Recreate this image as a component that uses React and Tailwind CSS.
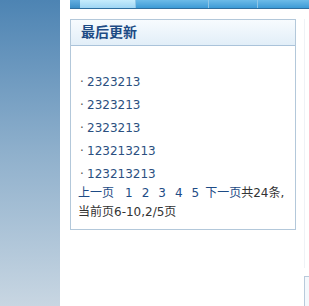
const items = ["2323213", "2323213", "2323213", "123213213", "123213213"];
const pages = ["1", "2", "3", "4", "5"];

const App = () => {
  return (
    <div className="flex h-[306px] w-[309px] overflow-hidden bg-white font-['DejaVu_Sans','Noto_Sans_CJK_SC',sans-serif]">
      <div className="h-full w-[60px] shrink-0 bg-gradient-to-b from-[#4d84b3] via-[#8fb0cc] to-[#c8d6e2]"></div>
      <div className="flex min-w-0 flex-1 flex-col">
        <div className="ml-[10px] flex h-[9px] border-b border-[#2f6f9f]">
          <div className="w-[10px] bg-gradient-to-b from-[#63aee0] to-[#3a8fc8]"></div>
          <div className="w-[56px] border-r border-[#8fc6e6] bg-gradient-to-b from-[#c6ecfc] to-[#9fd6f4]"></div>
          <div className="w-[73px] border-r border-[#8fc6e6] bg-gradient-to-b from-[#6cbbe8] to-[#3c9bd6]"></div>
          <div className="w-[49px] border-r border-[#8fc6e6] bg-gradient-to-b from-[#6cbbe8] to-[#3c9bd6]"></div>
          <div className="flex-1 bg-gradient-to-b from-[#6cbbe8] to-[#3c9bd6]"></div>
        </div>
        <div className="flex flex-1 pt-[10px]">
          <div className="ml-[10px] h-[211px] w-[226px] shrink-0 border border-[#b3c8da]">
            <div className="flex h-[26px] items-center border-b border-[#aac3da] bg-gradient-to-b from-[#f7fbfe] to-[#e2eef8] pl-[10px]">
              <span className="text-[14px] font-bold text-[#1d4b85]">最后更新</span>
            </div>
            <div className="px-[7px] pt-[24px]">
              {items.map((t, i) => (
                <div key={i} className="flex h-[23px] items-center text-[12px] text-[#2b4f80]">
                  <span className="w-[9px] pl-[2px] text-[#555]">·</span>
                  <span>{t}</span>
                </div>
              ))}
              <div className="mt-[-1px] flex flex-wrap text-[12px] leading-[19px] text-[#333]">
                <span className="text-[#1d4b85]">上一页</span>
                {pages.map((p, i) => (
                  <span key={p} className={i === 0 ? "ml-[11px] text-[#1d4b85]" : "ml-[9px] text-[#1d4b85]"}>{p}</span>
                ))}
                <span className="ml-[6px] text-[#1d4b85]">下一页</span>
                <span>共24条,</span>
                <span>当前页6-10,2/5页</span>
              </div>
            </div>
          </div>
          <div className="ml-[8px] flex flex-1 flex-col">
            <div className="h-[249px] border-l border-[#eef2f6]"></div>
            <div className="mt-[8px] flex-1 border-l border-t border-[#b8cadb] bg-[#f4f8fc]"></div>
          </div>
        </div>
      </div>
    </div>
  );
};

export default App;
